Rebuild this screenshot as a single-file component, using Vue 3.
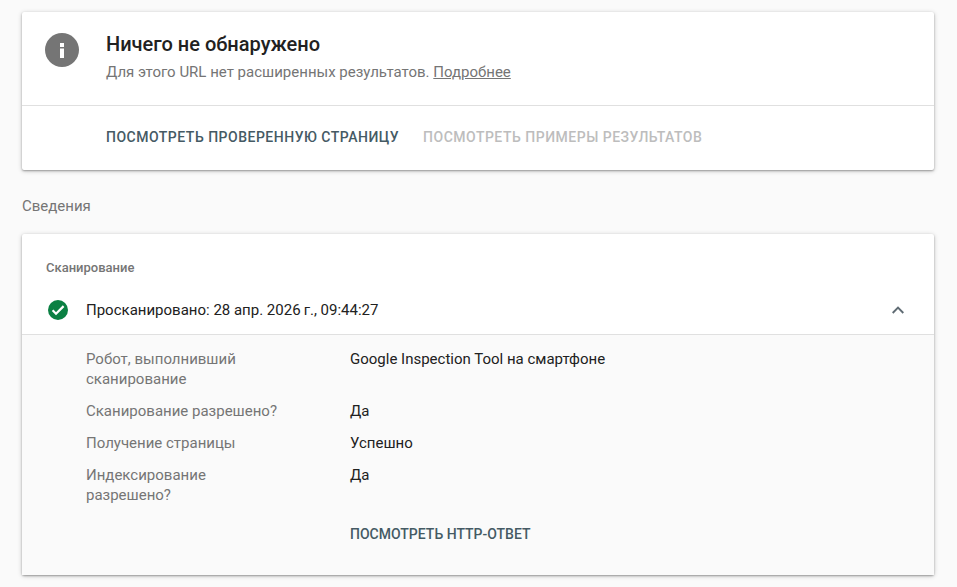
<script setup>
const rows = [
  { label: 'Робот, выполнивший сканирование', value: 'Google Inspection Tool на смартфоне' },
  { label: 'Сканирование разрешено?', value: 'Да' },
  { label: 'Получение страницы', value: 'Успешно' },
  { label: 'Индексирование разрешено?', value: 'Да' }
]
</script>

<template>
  <main class="page">
    <section class="card top">
      <div class="head">
        <svg class="info" viewBox="0 0 34 34" width="34" height="34">
          <circle cx="17" cy="17" r="17" fill="#757575" />
          <rect x="15" y="15.5" width="4" height="9.5" fill="#fff" />
          <rect x="15" y="10" width="4" height="4" fill="#fff" />
        </svg>
        <div>
          <h1>Ничего не обнаружено</h1>
          <p>Для этого URL нет расширенных результатов. <a>Подробнее</a></p>
        </div>
      </div>
      <div class="actions">
        <span class="act">ПОСМОТРЕТЬ ПРОВЕРЕННУЮ СТРАНИЦУ</span>
        <span class="act off">ПОСМОТРЕТЬ ПРИМЕРЫ РЕЗУЛЬТАТОВ</span>
      </div>
    </section>
    <h2>Сведения</h2>
    <section class="card">
      <div class="sec">Сканирование</div>
      <div class="sum">
        <svg viewBox="0 0 24 24" width="24" height="24">
          <circle cx="12" cy="12" r="10" fill="#0b8043" />
          <path d="M6.6 12.3l3.4 3.4 7.6-7.6" fill="none" stroke="#fff" stroke-width="2.2" />
        </svg>
        <span class="sumtext">Просканировано: 28 апр. 2026&#8201;г., 09:44:27</span>
        <svg class="chev" viewBox="0 0 12 8" width="12" height="8">
          <path d="M.7 7L6 1.7 11.3 7" fill="none" stroke="#5f6b73" stroke-width="1.9" />
        </svg>
      </div>
      <div class="body">
        <div v-for="r in rows" :key="r.label" class="row">
          <div class="lab">{{ r.label }}</div>
          <div class="val">{{ r.value }}</div>
        </div>
        <div class="row link"><div class="lab"></div><span class="http">ПОСМОТРЕТЬ HTTP-ОТВЕТ</span></div>
      </div>
    </section>
  </main>
</template>

<style scoped>
.page { width: 957px; height: 587px; overflow: hidden; box-sizing: border-box; padding: 12px 23px 0 22px; background: #fafafa; font-family: Roboto, sans-serif; }
.card { background: #fff; border-radius: 2px; box-shadow: 0 1px 2px rgba(0,0,0,.3), 0 1px 5px rgba(0,0,0,.2); }
.head { display: flex; gap: 27px; height: 94px; padding: 18px 0 0 23px; box-sizing: border-box; border-bottom: 1px solid #e0e0e0; }
.info { margin-top: 3px; }
h1 { margin: 2px 0 0; font-size: 20px; line-height: 24px; font-weight: 500; color: #212121; }
p { margin: 6px 0 0; font-size: 15px; line-height: 20px; color: #757575; }
a { text-decoration: underline; }
.actions { display: flex; gap: 24px; height: 64px; box-sizing: border-box; padding: 0 0 2px 84px; align-items: center; }
.act { font-size: 14px; font-weight: 500; letter-spacing: .5px; color: #455a64; }
.off { color: #bdbdbd; }
h2 { margin: 26px 0 18px; font-size: 15px; line-height: 20px; font-weight: 400; color: #757575; }
.sec { padding: 27px 0 0 24px; font-size: 13px; line-height: 14px; font-weight: 500; color: #757575; }
.sum { display: flex; align-items: center; height: 59px; box-sizing: border-box; padding: 10px 30px 0 24px; }
.sumtext { margin-left: 16px; flex: 1; font-size: 15px; color: #212121; }
.body { border-top: 1px solid #e0e0e0; background: #fafafa; padding: 14px 0 0 64px; height: 241px; box-sizing: border-box; }
.row { display: flex; margin-bottom: 12px; font-size: 15px; line-height: 20px; }
.lab { width: 264px; padding-right: 64px; box-sizing: border-box; color: #757575; }
.val { color: #212121; }
.link { margin-top: 19px; }
.http { font-size: 14px; font-weight: 500; color: #455a64; }
</style>

<style>
html, body { margin: 0; background: #fafafa; }
</style>
